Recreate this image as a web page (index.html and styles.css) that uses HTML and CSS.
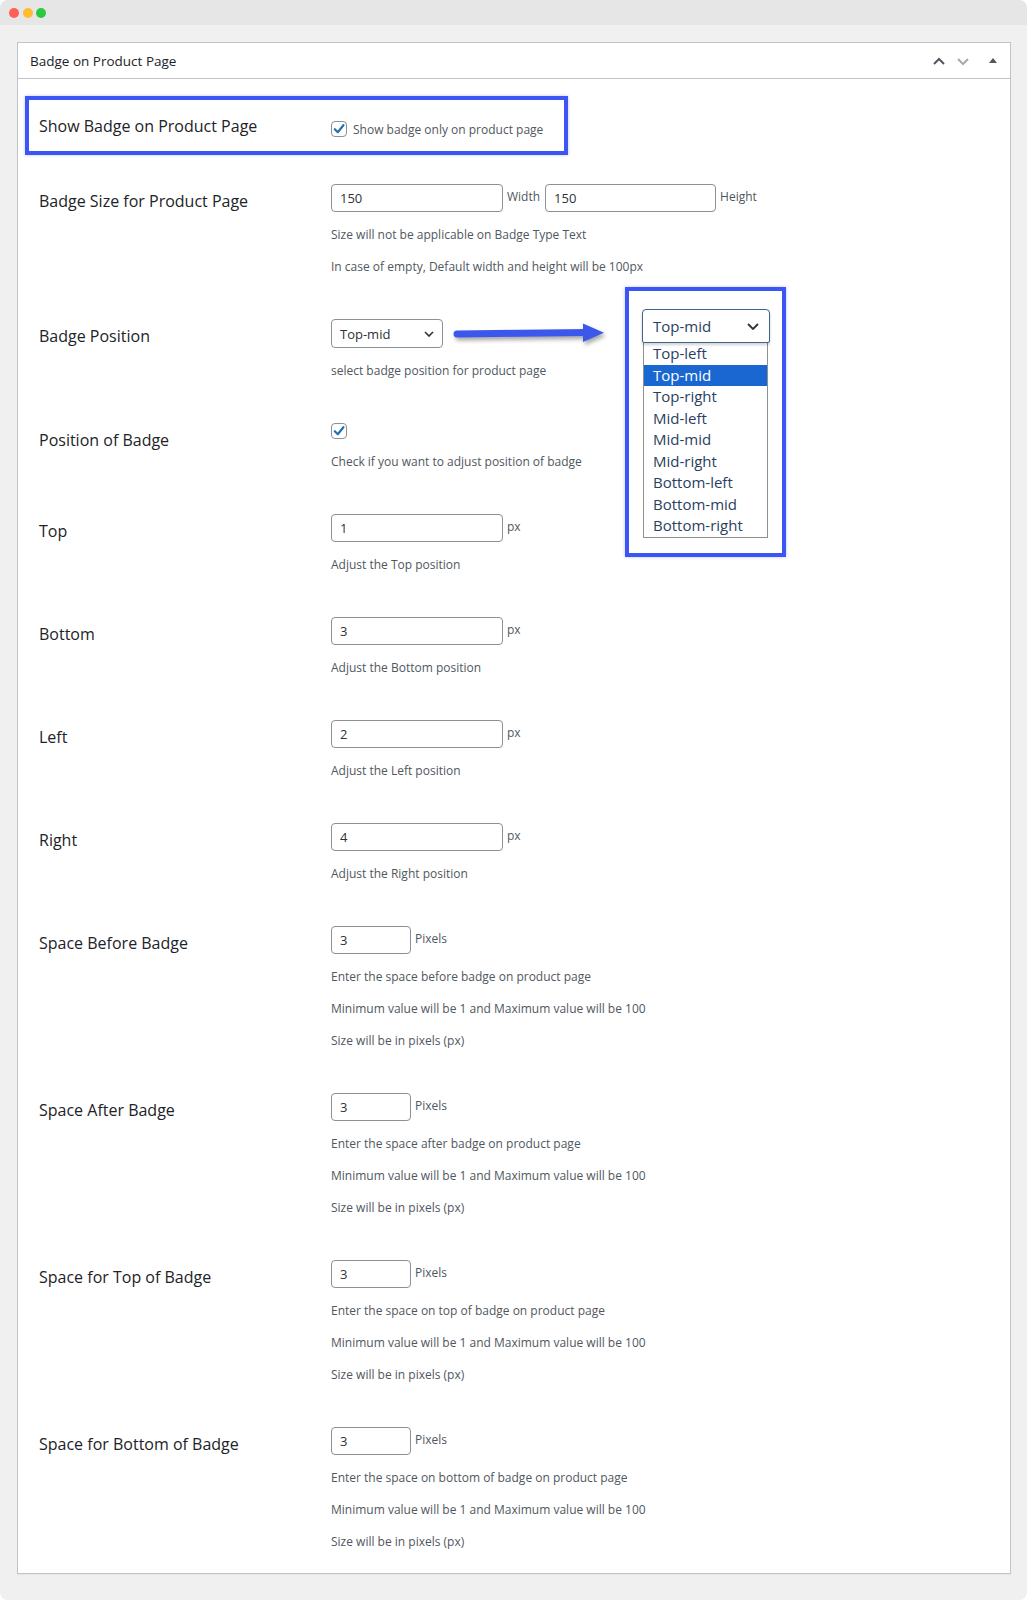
FILE: index.html
```html
<!DOCTYPE html>
<html lang="en">
<head>
<meta charset="utf-8">
<title>Badge on Product Page</title>
<link rel="stylesheet" href="styles.css">
</head>
<body>
<div class="window">
  <div class="titlebar">
    <span class="dot red"></span><span class="dot yellow"></span><span class="dot green"></span>
  </div>
  <div class="canvas">
    <div class="panel">
      <div class="panel-head">
        <h2 class="panel-title">Badge on Product Page</h2>
        <div class="head-actions">
          <svg class="hicon" width="14" height="12" viewBox="0 0 14 12"><polyline points="2,9 7,4 12,9" fill="none" stroke="#50575e" stroke-width="2"/></svg>
          <svg class="hicon" width="14" height="12" viewBox="0 0 14 12"><polyline points="2,4 7,9 12,4" fill="none" stroke="#a7aaad" stroke-width="2"/></svg>
          <svg class="hicon tri" width="10" height="12" viewBox="0 0 10 12"><polygon points="1,8 5,3 9,8" fill="#50575e"/></svg>
        </div>
      </div>
      <div class="panel-body">
        <div class="highlight">
          <div class="label">Show Badge on Product Page</div>
          <div class="check-line">
            <span class="checkbox"><svg width="14" height="14" viewBox="0 0 14 14"><polyline points="2.8,7.2 5.8,10.2 11.4,3.2" fill="none" stroke="#2271b1" stroke-width="2.2" stroke-linecap="round" stroke-linejoin="round"/></svg></span>
            <span class="check-text">Show badge only on product page</span>
          </div>
        </div>

        <div class="row">
          <div class="label">Badge Size for Product Page</div>
          <div class="field">
            <div class="control">
              <input class="input w-wide" type="text" value="150" readonly>
              <span class="unit">Width</span>
              <input class="input w-wide2" type="text" value="150" readonly>
              <span class="unit">Height</span>
            </div>
            <p class="desc">Size will not be applicable on Badge Type Text</p>
            <p class="desc">In case of empty, Default width and height will be 100px</p>
          </div>
        </div>

        <div class="row row-select">
          <div class="label">Badge Position</div>
          <div class="field">
            <div class="control">
              <div class="select"><span>Top-mid</span>
                <svg width="10" height="6" viewBox="0 0 10 6"><polyline points="1,1 5,5 9,1" fill="none" stroke="#2c3338" stroke-width="1.6"/></svg>
              </div>
            </div>
            <p class="desc">select badge position for product page</p>
          </div>
        </div>

        <div class="row">
          <div class="label">Position of Badge</div>
          <div class="field">
            <div class="control">
              <span class="checkbox"><svg width="14" height="14" viewBox="0 0 14 14"><polyline points="2.8,7.2 5.8,10.2 11.4,3.2" fill="none" stroke="#2271b1" stroke-width="2.2" stroke-linecap="round" stroke-linejoin="round"/></svg></span>
            </div>
            <p class="desc">Check if you want to adjust position of badge</p>
          </div>
        </div>

        <div class="row">
          <div class="label">Top</div>
          <div class="field">
            <div class="control"><input class="input w-wide" type="text" value="1" readonly><span class="unit">px</span></div>
            <p class="desc">Adjust the Top position</p>
          </div>
        </div>

        <div class="row">
          <div class="label">Bottom</div>
          <div class="field">
            <div class="control"><input class="input w-wide" type="text" value="3" readonly><span class="unit">px</span></div>
            <p class="desc">Adjust the Bottom position</p>
          </div>
        </div>

        <div class="row">
          <div class="label">Left</div>
          <div class="field">
            <div class="control"><input class="input w-wide" type="text" value="2" readonly><span class="unit">px</span></div>
            <p class="desc">Adjust the Left position</p>
          </div>
        </div>

        <div class="row">
          <div class="label">Right</div>
          <div class="field">
            <div class="control"><input class="input w-wide" type="text" value="4" readonly><span class="unit">px</span></div>
            <p class="desc">Adjust the Right position</p>
          </div>
        </div>

        <div class="row">
          <div class="label">Space Before Badge</div>
          <div class="field">
            <div class="control"><input class="input w-small" type="text" value="3" readonly><span class="unit">Pixels</span></div>
            <p class="desc">Enter the space before badge on product page</p>
            <p class="desc">Minimum value will be 1 and Maximum value will be 100</p>
            <p class="desc">Size will be in pixels (px)</p>
          </div>
        </div>

        <div class="row">
          <div class="label">Space After Badge</div>
          <div class="field">
            <div class="control"><input class="input w-small" type="text" value="3" readonly><span class="unit">Pixels</span></div>
            <p class="desc">Enter the space after badge on product page</p>
            <p class="desc">Minimum value will be 1 and Maximum value will be 100</p>
            <p class="desc">Size will be in pixels (px)</p>
          </div>
        </div>

        <div class="row">
          <div class="label">Space for Top of Badge</div>
          <div class="field">
            <div class="control"><input class="input w-small" type="text" value="3" readonly><span class="unit">Pixels</span></div>
            <p class="desc">Enter the space on top of badge on product page</p>
            <p class="desc">Minimum value will be 1 and Maximum value will be 100</p>
            <p class="desc">Size will be in pixels (px)</p>
          </div>
        </div>

        <div class="row">
          <div class="label">Space for Bottom of Badge</div>
          <div class="field">
            <div class="control"><input class="input w-small" type="text" value="3" readonly><span class="unit">Pixels</span></div>
            <p class="desc">Enter the space on bottom of badge on product page</p>
            <p class="desc">Minimum value will be 1 and Maximum value will be 100</p>
            <p class="desc">Size will be in pixels (px)</p>
          </div>
        </div>
      </div>
    </div>
  </div>

  <svg class="arrow" width="160" height="30" viewBox="0 0 160 30">
    <line x1="9" y1="15" x2="140" y2="13.5" stroke="#3b57ec" stroke-width="7" stroke-linecap="round"/>
    <polygon points="135,4.5 156,13.8 135,23" fill="#3b57ec"/>
  </svg>

  <div class="callout">
    <div class="select-open">
      <span>Top-mid</span>
      <svg width="12" height="7" viewBox="0 0 12 7"><polyline points="1,1 6,6 11,1" fill="none" stroke="#2c3338" stroke-width="1.8"/></svg>
    </div>
    <ul class="options">
      <li>Top-left</li>
      <li class="selected">Top-mid</li>
      <li>Top-right</li>
      <li>Mid-left</li>
      <li>Mid-mid</li>
      <li>Mid-right</li>
      <li>Bottom-left</li>
      <li>Bottom-mid</li>
      <li>Bottom-right</li>
    </ul>
  </div>
</div>
</body>
</html>
```

FILE: styles.css
```css
* { box-sizing: border-box; }

html, body {
  margin: 0;
  padding: 0;
  background: #ffffff;
}

body {
  font-family: "Open Sans", "Noto Sans", sans-serif;
  color: #1d2327;
}

.window {
  position: relative;
  width: 1027px;
  height: 1600px;
  background: #f0f0f0;
  border-radius: 8px;
  overflow: hidden;
}

.titlebar {
  height: 25px;
  background: #e6e6e6;
  display: flex;
  align-items: center;
  gap: 3.5px;
  padding-left: 9px;
}

.dot {
  width: 10px;
  height: 10px;
  border-radius: 50%;
}
.red { background: #fe5f57; }
.yellow { background: #febc2e; }
.green { background: #2bc840; }

.canvas {
  padding: 17px 16px 0 17px;
}

.panel {
  background: #ffffff;
  border: 1px solid #c3c4c7;
  box-shadow: 0 1px 1px rgba(0, 0, 0, 0.04);
}

.panel-head {
  height: 36px;
  border-bottom: 1px solid #c3c4c7;
  display: flex;
  align-items: center;
  justify-content: space-between;
  padding: 0 12px;
}

.panel-title {
  margin: 0;
  font-size: 13.5px;
  font-weight: 400;
  color: #1d2327;
}

.head-actions {
  display: flex;
  align-items: center;
  gap: 10px;
}
.hicon { display: block; }
.tri { margin-left: 8px; }

.panel-body {
  padding: 17px 0 0 7px;
}

.highlight {
  width: 543px;
  height: 59px;
  border: 4px solid #3c55f5;
  box-shadow: 0 0 3px rgba(60, 85, 245, 0.35);
  display: flex;
  align-items: center;
  padding-left: 10px;
  margin-bottom: 8px;
}

.label {
  width: 292px;
  flex-shrink: 0;
  font-size: 16px;
  line-height: 22px;
  color: #1d2327;
}

.highlight .label {
  padding-top: 1px;
}

.check-line {
  display: flex;
  align-items: center;
  gap: 6px;
  padding-top: 6px;
}

.check-text {
  font-size: 12px;
  color: #50575e;
  position: relative;
  top: 1px;
}

.checkbox {
  width: 16px;
  height: 16px;
  border: 1px solid #8c8f94;
  border-radius: 4px;
  background: #ffffff;
  display: flex;
  align-items: center;
  justify-content: center;
}
.checkbox svg { display: block; }

.row {
  display: flex;
  padding: 21px 0 21px 14px;
}

.row .label {
  padding-top: 6px;
}

.field {
  display: flex;
  flex-direction: column;
}

.control {
  display: flex;
  align-items: center;
}

.input {
  height: 28px;
  border: 1px solid #8c8f94;
  border-radius: 4px;
  padding: 0 8px;
  font-family: "Open Sans", "Noto Sans", sans-serif;
  font-size: 13px;
  color: #2c3338;
  background: #ffffff;
  outline: none;
  margin: 0;
}
.w-wide { width: 172px; }
.w-wide2 { width: 171px; }
.w-small { width: 80px; }

.unit {
  font-size: 12px;
  color: #50575e;
  margin: 0 5px 0 4px;
  position: relative;
  top: -2px;
}

.select {
  width: 112px;
  height: 29px;
  border: 1px solid #8c8f94;
  border-radius: 4px;
  display: flex;
  align-items: center;
  justify-content: space-between;
  padding: 0 8px 0 8px;
  font-size: 13px;
  color: #2c3338;
}
.select svg { display: block; }

.desc {
  margin: 12px 0 0;
  font-size: 12px;
  line-height: 20px;
  color: #50575e;
}
.control + .desc {
  margin-top: 13px;
}

/* annotation overlay */
.arrow {
  position: absolute;
  left: 448px;
  top: 319px;
  filter: drop-shadow(2px 3px 2px rgba(0, 0, 0, 0.35));
}

.callout {
  position: absolute;
  left: 625px;
  top: 287px;
  width: 161px;
  height: 270px;
  border: 4px solid #3c55f5;
  background: #ffffff;
  box-shadow: 0 0 3px rgba(60, 85, 245, 0.35);
  padding: 18px 0 0 13px;
}

.select-open {
  width: 128px;
  height: 34px;
  border: 1px solid #41638f;
  border-radius: 4px 4px 2px 2px;
  box-shadow: 0 2px 3px rgba(0, 0, 0, 0.18);
  display: flex;
  align-items: center;
  justify-content: space-between;
  padding: 0 10px 0 10px;
  font-size: 15px;
  color: #2a3f5f;
  background: #ffffff;
  position: relative;
  z-index: 1;
}
.select-open svg { display: block; }

.options {
  list-style: none;
  margin: 0 0 0 1px;
  padding: 0;
  width: 125px;
  border: 1px solid #8f8f8f;
  border-top: none;
}

.options li {
  height: 21.5px;
  line-height: 21.5px;
  padding-left: 9px;
  font-size: 15px;
  color: #2a3f5f;
}

.options li.selected {
  background: #1a67d2;
  color: #ffffff;
}
```
